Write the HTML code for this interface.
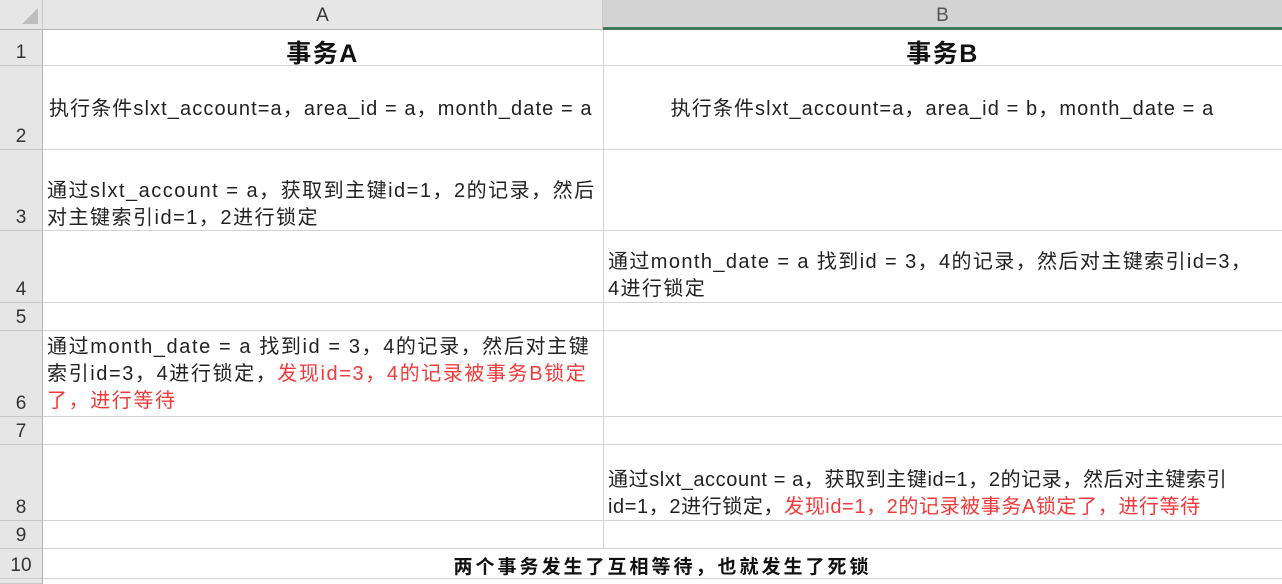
<!DOCTYPE html>
<html><head><meta charset="utf-8"><style>
body{margin:0;width:1282px;height:584px;background:#fff;position:relative;overflow:hidden;font-family:"Liberation Sans","Noto Sans CJK SC",sans-serif;color:#222}
div{position:absolute;box-sizing:border-box}
.hl{left:0;width:1282px;height:1px;background:#d4d4d4}
.rh{left:0;width:42px;background:#e6e6e6;border-bottom:1px solid #c8c8c8;text-align:center;font-size:19px;color:#333;display:flex;align-items:flex-end;justify-content:center;padding-bottom:1px;line-height:22px}
.t{font-size:20px;letter-spacing:1.1px;line-height:27px;white-space:nowrap}
.r{color:#f23a3a}
</style></head><body>
<div style="left:0;top:0;width:1282px;height:30px;background:#e6e6e6;border-bottom:1px solid #b5b5b5"></div>
<div style="left:603px;top:0;width:679px;height:30px;background:#d3d3d3;border-bottom:3px solid #3f7a5a"></div>
<div style="left:22px;top:8px;width:0;height:0;border-left:16px solid transparent;border-bottom:16px solid #bdbdbd"></div>
<div style="left:42px;top:0;width:1px;height:30px;background:#c8c8c8"></div>
<div style="left:602px;top:0;width:1px;height:30px;background:#c8c8c8"></div>
<div style="left:43px;top:5px;width:559px;text-align:center;font-size:19px;color:#333">A</div>
<div style="left:603px;top:5px;width:679px;text-align:center;font-size:19px;color:#555">B</div>
<div style="left:42px;top:30px;width:1px;height:554px;background:#b5b5b5"></div>
<div class="rh" style="top:30px;height:36px">1</div>
<div class="rh" style="top:66px;height:84px">2</div>
<div class="rh" style="top:150px;height:81px">3</div>
<div class="rh" style="top:231px;height:72px">4</div>
<div class="rh" style="top:303px;height:28px">5</div>
<div class="rh" style="top:331px;height:86px">6</div>
<div class="rh" style="top:417px;height:28px">7</div>
<div class="rh" style="top:445px;height:76px">8</div>
<div class="rh" style="top:521px;height:28px">9</div>
<div class="rh" style="top:549px;height:30px">10</div>
<div class="rh" style="top:579px;height:5px"></div>
<div class="hl" style="top:65px;left:43px"></div>
<div class="hl" style="top:149px;left:43px"></div>
<div class="hl" style="top:230px;left:43px"></div>
<div class="hl" style="top:302px;left:43px"></div>
<div class="hl" style="top:330px;left:43px"></div>
<div class="hl" style="top:416px;left:43px"></div>
<div class="hl" style="top:444px;left:43px"></div>
<div class="hl" style="top:520px;left:43px"></div>
<div class="hl" style="top:548px;left:43px"></div>
<div class="hl" style="top:578px;left:43px"></div>
<div style="left:603px;top:30px;width:1px;height:519px;background:#d4d4d4"></div>
<div style="left:43px;top:34px;width:559px;text-align:center;font-size:25px;letter-spacing:1.5px;font-weight:bold;color:#111">事务A</div>
<div style="left:603px;top:34px;width:679px;text-align:center;font-size:25px;letter-spacing:1.5px;font-weight:bold;color:#111">事务B</div>
<div class="t" style="left:49px;top:96px">执行条件slxt_account=a，area_id = a，month_date = a</div>
<div class="t" style="left:603px;width:679px;text-align:center;top:96px">执行条件slxt_account=a，area_id = b，month_date = a</div>
<div class="t" style="left:47px;top:178px;letter-spacing:1.5px">通过slxt_account = a，获取到主键id=1，2的记录，然后<br>对主键索引id=1，2进行锁定</div>
<div class="t" style="left:608px;top:249px;letter-spacing:1.4px">通过month_date = a 找到id = 3，4的记录，然后对主键索引id=3，<br>4进行锁定</div>
<div class="t" style="left:47px;top:334px;letter-spacing:1.6px">通过month_date = a 找到id = 3，4的记录，然后对主键<br>索引id=3，4进行锁定，<span class="r">发现id=3，4的记录被事务B锁定</span><br><span class="r">了，进行等待</span></div>
<div class="t" style="left:608px;top:467px;letter-spacing:0.6px">通过slxt_account = a，获取到主键id=1，2的记录，然后对主键索引<br>id=1，2进行锁定，<span class="r">发现id=1，2的记录被事务A锁定了，进行等待</span></div>
<div style="left:43px;top:552px;width:1239px;text-align:center;font-size:19px;letter-spacing:3px;font-weight:bold;color:#111">两个事务发生了互相等待，也就发生了死锁</div>
</body></html>
